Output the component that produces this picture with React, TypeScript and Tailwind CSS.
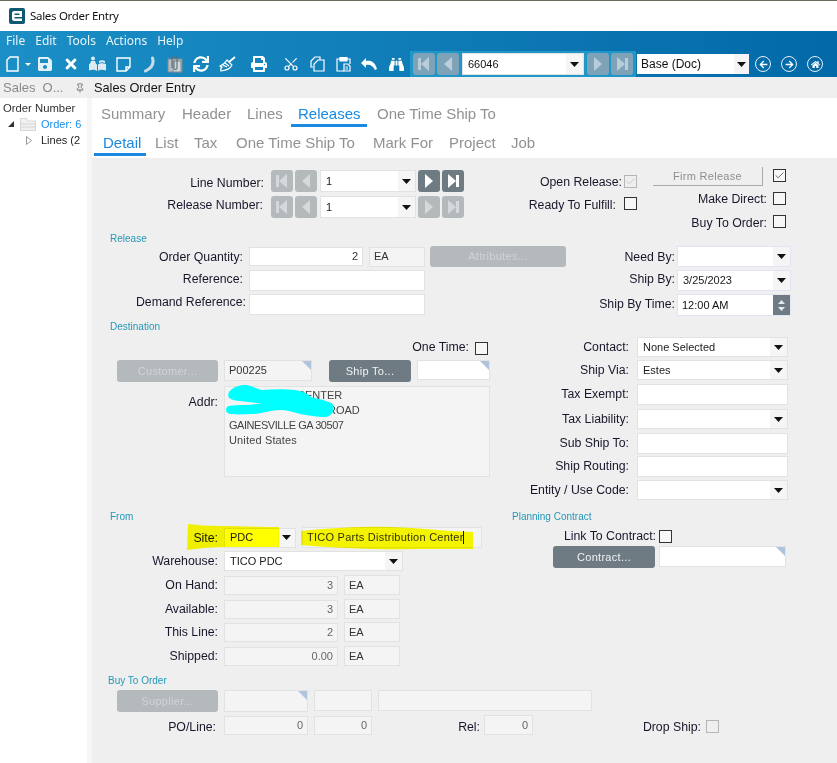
import type { ReactNode } from 'react';
import clsx from 'clsx';
import { Check, Pin, Scissors } from 'lucide-react';
import { FaArrowLeft, FaArrowRight, FaBinoculars, FaHome, FaPrint, FaSave, FaSync, FaTimes } from 'react-icons/fa';

type Glyph = 'first' | 'prev' | 'next' | 'last';

function NavButton({ glyph, className, fill }: { glyph: Glyph; className: string; fill: string }) {
  return (
    <div className={clsx('w-[22px] h-[22px] rounded-[3px] flex items-center justify-center shrink-0', className)}>
      <svg width="16" height="16" viewBox="0 0 16 16" fill={fill}>
        {glyph === 'first' && <path d="M2 2h3v12H2zM13 1v14L5 8z" />}
        {glyph === 'prev' && <path d="M12 1v14L4 8z" />}
        {glyph === 'next' && <path d="M4 1v14l8-7z" />}
        {glyph === 'last' && <path d="M11 2h3v12h-3zM3 1v14l8-7z" />}
      </svg>
    </div>
  );
}

function Arrow() {
  return (
    <svg width="9" height="5" viewBox="0 0 9 5" fill="#111">
      <path d="M0 0h9L4.500 5z" />
    </svg>
  );
}

function Label({ children, className }: { children: ReactNode; className: string }) {
  return <div className={clsx('shrink-0 text-right text-[12.3px] leading-none whitespace-nowrap text-[#17172b]', className)}>{children}</div>;
}

function Caption({ children, className }: { children: ReactNode; className: string }) {
  return <div className={clsx('text-[10px] text-[#2398b8] whitespace-nowrap', className)}>{children}</div>;
}

function Field({ children, className, readOnly, right, corner }: { children?: ReactNode; className: string; readOnly?: boolean; right?: boolean; corner?: boolean }) {
  return (
    <div
      className={clsx(
        'relative shrink-0 border border-[#e2e2e2] flex items-center px-[4px] text-[11px] text-[#333] whitespace-nowrap overflow-hidden',
        readOnly ? 'bg-[#f4f4f4]' : 'bg-white',
        right && 'justify-end',
        className,
      )}
    >
      {children}
      {corner && <div className="absolute top-0 right-0 w-0 h-0 border-l-[9px] border-l-transparent border-t-[9px] border-t-[#b0c4de]" />}
    </div>
  );
}

function Combo({ text, className, lilac }: { text?: string; className: string; lilac?: boolean }) {
  return (
    <div className={clsx('shrink-0 flex bg-white border text-[11px] text-[#1a1a1a]', lilac ? 'border-[#e3e3f6]' : 'border-[#e2e2e2]', className)}>
      <div className="flex-1 flex items-center pl-[5px] whitespace-nowrap overflow-hidden">{text}</div>
      <div className="w-[17px] flex items-center justify-center bg-[#f5f5f5]">
        <Arrow />
      </div>
    </div>
  );
}

function Btn({ children, className, off }: { children: ReactNode; className: string; off?: boolean }) {
  return (
    <div className={clsx('shrink-0 rounded-[3px] flex items-center justify-center text-[11px] tracking-[0.3px]', off ? 'bg-[#b4b9bc] text-[#d0d4d6]' : 'bg-[#6e7b83] text-[#f0f2f3]', className)}>
      {children}
    </div>
  );
}

function Cb({ on, off, className }: { on?: boolean; off?: boolean; className?: string }) {
  return (
    <div className={clsx('w-[13px] h-[13px] shrink-0 border flex items-center justify-center', off ? 'border-[#b5b5b5]' : 'border-[#333] bg-[#f7f7f7]', className)}>
      {on && <Check size={11} strokeWidth={1.5} color={off ? '#b5b5b5' : '#333'} />}
    </div>
  );
}

function Slot({ children }: { children: ReactNode }) {
  return <div className="w-[26px] flex items-center justify-center shrink-0 text-white">{children}</div>;
}

function Tab({ children, active, className }: { children: ReactNode; active?: boolean; className?: string }) {
  return (
    <div className={clsx('h-full flex items-center pt-[7px] border-b-[3px] text-[15px] whitespace-nowrap', active ? 'border-[#1a8ae0] text-[#1a8ae0]' : 'border-transparent text-[#919191]', className)}>
      {children}
    </div>
  );
}

function RightRow({ label, className, children }: { label: string; className?: string; children: ReactNode }) {
  return (
    <div className={clsx('flex items-center', className)}>
      <Label className="w-[129px]">{label}</Label>
      <div className="ml-[8px]">{children}</div>
    </div>
  );
}

function QtyRow({ label, value, className }: { label: string; value: string; className: string }) {
  return (
    <div className={clsx('flex items-center h-[20px]', className)}>
      <Label className="w-[126px]">{label}</Label>
      <Field readOnly right className="ml-[6px] w-[114px] h-[19px] text-[#666]">{value}</Field>
      <Field readOnly className="ml-[6px] w-[56px] h-[20px]">EA</Field>
    </div>
  );
}

export default function App() {
  return (
    <div className="w-[837px] h-[763px] overflow-hidden bg-[#efefef] font-['Liberation_Sans',sans-serif]">
      <div className="h-[1px] bg-[#6b6b5e]" />
      <div className="h-[30px] bg-white flex items-center pl-[9px]">
        <svg width="16" height="16" viewBox="0 0 16 16">
          <rect width="16" height="16" rx="2" fill="#0f5a72" />
          <path d="M3 4.500 4.500 3H13v6H5.500v1.500H13V13H4.500L3 11.500zM5.500 5.500V7h5V5.500z" fill="#fff" fillRule="evenodd" />
        </svg>
        <div className="ml-[5px] text-[11.5px] font-['Noto_Sans',sans-serif] tracking-[-0.3px] text-[#111]">Sales Order Entry</div>
      </div>

      <div className="h-[46px] bg-gradient-to-r from-[#1b8fc6] to-[#0369a8]">
        <div className="h-[20px] flex items-center pl-[6px] gap-[10px] text-[12px] text-[#e8f4fb] font-['Noto_Sans',sans-serif]">
          <span>File</span>
          <span>Edit</span>
          <span>Tools</span>
          <span>Actions</span>
          <span>Help</span>
        </div>
        <div className="h-[26px] flex items-center">
          <div className="w-[32px] shrink-0 flex items-center pl-[6px] text-white">
            <svg width="13" height="16" viewBox="0 0 13 16" fill="none" stroke="#fff" strokeWidth="1.4">
              <path d="M4 1h8v14H1V4z" />
            </svg>
            <svg className="ml-[6px]" width="6" height="3" viewBox="0 0 6 3" fill="#fff">
              <path d="M0 0h6L3 3z" />
            </svg>
          </div>
          <Slot><FaSave size={16} color="#e4f0f7" /></Slot>
          <Slot><FaTimes size={16} /></Slot>
          <Slot>
            <svg width="17" height="16" viewBox="0 0 17 16" fill="#dcebf4">
              <circle cx="4" cy="2.500" r="2" />
              <path d="M2 5h4l1 3H1z" />
              <path d="M0 8c3-1 6-1 8 .500V15c-2-1.500-5-1.500-8-.500zM9 8.500c2-1.500 5-1.500 8-.500v6.500c-3-1-6-1-8 .500z" />
              <path d="M10 5c2-1 4-1 6 0v2c-2-1-4-1-6 0z" />
            </svg>
          </Slot>
          <Slot>
            <svg width="15" height="15" viewBox="0 0 15 15" fill="none" stroke="#fff" strokeWidth="1.4">
              <path d="M1 1h13v9l-4 4H1zM14 10h-4v4" />
            </svg>
          </Slot>
          <Slot>
            <svg width="13" height="17" viewBox="0 0 13 17" fill="none" stroke="#c9dbe6" strokeWidth="3" strokeLinecap="round">
              <path d="M9.500 2c1.500 5-.500 10-7 13" />
            </svg>
          </Slot>
          <Slot>
            <svg width="16" height="17" viewBox="0 0 16 17">
              <rect x="1" y="3" width="14" height="13" fill="#b4bec4" stroke="#7b8a93" />
              <rect x="6" y="5" width="8" height="11" fill="#cfd6da" stroke="#7b8a93" />
              <path d="M5 12V3c0-3 5-3 5 0v9c0 2-3 2-3 0V5" fill="none" stroke="#5f6c74" strokeWidth="1.100" />
            </svg>
          </Slot>
          <Slot><FaSync size={16} /></Slot>
          <Slot>
            <svg width="17" height="16" viewBox="0 0 17 16" fill="none" stroke="#fff" strokeWidth="1.200">
              <path d="M16 1 10 6" strokeWidth="1.800" />
              <path d="M8 4l5 5c-2 4-5 5-11 6-1-2 0-3 1-4-1 0-1 0-2-1 3-1 5-3 7-6zM4 9l4 2M6 7l4 3" />
            </svg>
          </Slot>
          <div className="w-[6px] shrink-0" />
          <Slot><FaPrint size={16} /></Slot>
          <div className="w-[6px] shrink-0" />
          <Slot><Scissors size={16} strokeWidth={1.8} className="-rotate-90" /></Slot>
          <Slot>
            <svg width="15" height="16" viewBox="0 0 15 16" fill="none" stroke="#fff" strokeWidth="1.200">
              <path d="M3 11H1V5l4-4h5v3" />
              <path d="M8 4h6v11H4V8z" />
            </svg>
          </Slot>
          <Slot>
            <svg width="15" height="16" viewBox="0 0 15 16" fill="none" stroke="#fff" strokeWidth="1.200">
              <path d="M4 3H1v12h7M11 3h3v5" />
              <path d="M4 1.500h7V5H4z" fill="#fff" />
              <path d="M8 8h4l2 2v5H8zM9.500 11H12M9.500 13H12" />
            </svg>
          </Slot>
          <Slot>
            <svg width="16" height="12" viewBox="0 0 16 12" fill="#fff">
              <path d="M0 5l5-5v3c5-1 9 1 11 8l-2 1c-2-4-5-6-9-5v3z" />
            </svg>
          </Slot>
          <div className="w-[1px] shrink-0" />
          <Slot><FaBinoculars size={15} /></Slot>
          <div className="h-full flex items-center bg-[#2196c8] px-[3px] gap-[2px] ml-[1px]">
            <NavButton glyph="first" className="bg-[#7ea3b8]" fill="#b9cdd9" />
            <NavButton glyph="prev" className="bg-[#7ea3b8]" fill="#b9cdd9" />
            <div className="w-[122px] h-[22px] ml-[1px] mr-[1px] flex bg-white border border-[#e2e2e2] text-[11px] text-[#111]">
              <div className="flex-1 flex items-center pl-[5px]">66046</div>
              <div className="w-[17px] flex items-center justify-center bg-[#f5f5f5]"><Arrow /></div>
            </div>
            <NavButton glyph="next" className="bg-[#7ea3b8]" fill="#b9cdd9" />
            <NavButton glyph="last" className="bg-[#7ea3b8]" fill="#b9cdd9" />
          </div>
          <div className="ml-[1px] w-[112px] h-[20px] flex bg-white text-[12px] text-[#111]">
            <div className="flex-1 flex items-center pl-[4px]">Base (Doc)</div>
            <div className="w-[15px] flex items-center justify-center bg-[#f5f5f5]"><Arrow /></div>
          </div>
          <div className="ml-[6px] w-[16px] h-[16px] rounded-full border border-[#e5f0f7] flex items-center justify-center"><FaArrowLeft size={9} color="#fff" /></div>
          <div className="ml-[10px] w-[16px] h-[16px] rounded-full border border-[#e5f0f7] flex items-center justify-center"><FaArrowRight size={9} color="#fff" /></div>
          <div className="ml-[10px] w-[16px] h-[16px] rounded-full border border-[#e5f0f7] flex items-center justify-center"><FaHome size={9} color="#fff" /></div>
        </div>
      </div>

      <div className="flex h-[686px]">
        <div className="w-[87px] shrink-0 bg-white overflow-hidden">
          <div className="h-[21px] bg-[#efefef] flex items-center pl-[3px] text-[13px] text-[#8a8a8a] whitespace-nowrap">
            <span>Sales</span>
            <span className="ml-[7px]">O...</span>
            <Pin size={10} className="ml-[12px]" color="#666" />
          </div>
          <div className="pl-[3px] pt-[4px] text-[11.3px] leading-[13px] text-[#333]">Order Number</div>
          <div className="flex items-center h-[16px] mt-[1px] text-[11px] whitespace-nowrap">
            <svg className="ml-[8px]" width="6" height="6" viewBox="0 0 6 6" fill="#333"><path d="M6 0v6H0z" /></svg>
            <svg className="ml-[6px]" width="16" height="13" viewBox="0 0 16 13" fill="#f1f1f1" stroke="#c9c9c9" strokeWidth="0.7">
              <path d="M0.500 3V0.500h6L8 3h7.500v9.500h-15z" />
              <path d="M0.500 6h15M0.500 9h15" />
            </svg>
            <span className="ml-[5px] text-[#1a8fe8]">Order: 6</span>
          </div>
          <div className="flex items-center h-[16px] text-[11px] whitespace-nowrap text-[#222]">
            <svg className="ml-[26px]" width="6" height="9" viewBox="0 0 6 9" fill="none" stroke="#999"><path d="M0.500 0.500v8l5-4z" /></svg>
            <span className="ml-[9px]">Lines (2</span>
          </div>
        </div>
        <div className="w-[5px] shrink-0 bg-[#f6f6f6]">
          <div className="h-[21px] bg-[#efefef]" />
        </div>

        <div className="w-[745px]">
          <div className="h-[21px] bg-[#efefef] flex items-center pl-[2px] text-[12.75px] text-[#111]">Sales Order Entry</div>
          <div className="bg-white h-[60px]">
            <div className="h-[29px] flex pl-[9px]">
              <Tab className="w-[81px]">Summary</Tab>
              <Tab className="w-[65px]">Header</Tab>
              <Tab className="w-[44px]">Lines</Tab>
              <Tab active className="w-[76px] pl-[7px]">Releases</Tab>
              <Tab className="ml-[10px]">One Time Ship To</Tab>
            </div>
            <div className="h-[29px] flex pl-[2px]">
              <Tab active className="w-[52px] pl-[9px]">Detail</Tab>
              <Tab className="ml-[9px] w-[39px]">List</Tab>
              <Tab className="w-[42px]">Tax</Tab>
              <Tab className="w-[137px]">One Time Ship To</Tab>
              <Tab className="w-[76px]">Mark For</Tab>
              <Tab className="w-[62px]">Project</Tab>
              <Tab>Job</Tab>
            </div>
          </div>

          <div className="flex h-[74px]">
            <div className="w-[408px] shrink-0 pt-[12px]">
              <div className="flex items-center h-[22px]">
                <Label className="w-[172px] pt-[4px]">Line Number:</Label>
                <div className="ml-[7px] flex gap-[2px]">
                  <NavButton glyph="first" className="bg-[#b4b9bc]" fill="#d5d9dc" />
                  <NavButton glyph="prev" className="bg-[#b4b9bc]" fill="#d5d9dc" />
                </div>
                <Combo text="1" className="ml-[3px] w-[96px] h-[22px]" />
                <div className="ml-[2px] flex gap-[2px]">
                  <NavButton glyph="next" className="bg-[#6e7b83]" fill="#fff" />
                  <NavButton glyph="last" className="bg-[#6e7b83]" fill="#fff" />
                </div>
              </div>
              <div className="flex items-center h-[22px] mt-[4px]">
                <Label className="w-[171px] pb-[4px]">Release Number:</Label>
                <div className="ml-[8px] flex gap-[2px]">
                  <NavButton glyph="first" className="bg-[#b4b9bc]" fill="#d5d9dc" />
                  <NavButton glyph="prev" className="bg-[#b4b9bc]" fill="#d5d9dc" />
                </div>
                <Combo text="1" className="ml-[3px] w-[96px] h-[22px]" />
                <div className="ml-[2px] flex gap-[2px]">
                  <NavButton glyph="next" className="bg-[#b4b9bc]" fill="#d5d9dc" />
                  <NavButton glyph="last" className="bg-[#b4b9bc]" fill="#d5d9dc" />
                </div>
              </div>
            </div>
            <div className="w-[140px] shrink-0 pt-[17px]">
              <div className="flex items-center h-[13px]">
                <Label className="w-[122px] pt-[2px]">Open Release:</Label>
                <Cb on off className="ml-[2px]" />
              </div>
              <div className="flex items-center h-[13px] mt-[9px]">
                <Label className="w-[116px] pt-[4px]">Ready To Fulfill:</Label>
                <Cb className="ml-[8px]" />
              </div>
            </div>
            <div className="ml-[13px] pt-[9px]">
              <div className="flex h-[19px]">
                <div className="w-[110px] h-[19px] border-r border-b border-[#aaa] flex items-center justify-center text-[11px] text-[#8b8f92] tracking-[0.3px]">Firm Release</div>
                <Cb on className="ml-[10px] mt-[2px]" />
              </div>
              <div className="flex items-center h-[13px] mt-[6px]">
                <Label className="w-[114px] pt-[2px]">Make Direct:</Label>
                <Cb className="ml-[6px]" />
              </div>
              <div className="flex items-center h-[13px] mt-[10px]">
                <Label className="w-[114px] pt-[4px]">Buy To Order:</Label>
                <Cb className="ml-[6px]" />
              </div>
            </div>
          </div>

          <div className="flex h-[88px]">
            <div className="w-[478px] shrink-0">
              <Caption className="pl-[18px] h-[14px] leading-[14px]">Release</Caption>
              <div className="flex items-center h-[21px]">
                <Label className="w-[151px] pt-[2px]">Order Quantity:</Label>
                <Field right className="ml-[6px] w-[114px] h-[19px] text-[#111]">2</Field>
                <Field readOnly className="ml-[6px] w-[56px] h-[20px]">EA</Field>
                <Btn off className="ml-[5px] w-[136px] h-[21px]">Attributes...</Btn>
              </div>
              <div className="flex items-center h-[21px] mt-[3px]">
                <Label className="w-[151px] pb-[2px]">Reference:</Label>
                <Field className="ml-[6px] w-[176px] h-[21px]" />
              </div>
              <div className="flex items-center h-[21px] mt-[3px]">
                <Label className="w-[154px] pb-[4px]">Demand Reference:</Label>
                <Field className="ml-[3px] w-[176px] h-[21px]" />
              </div>
            </div>
            <div className="pt-[14px]">
              <div className="flex items-center h-[21px]">
                <Label className="w-[105px] pt-[2px]">Need By:</Label>
                <Combo lilac className="ml-[2px] w-[114px] h-[21px]" />
              </div>
              <div className="flex items-center h-[21px] mt-[3px]">
                <Label className="w-[105px] pb-[2px]">Ship By:</Label>
                <Combo lilac text="3/25/2023" className="ml-[2px] w-[114px] h-[21px]" />
              </div>
              <div className="flex items-center h-[22px] mt-[3px]">
                <Label className="w-[105px] pb-[2px]">Ship By Time:</Label>
                <div className="ml-[2px] w-[114px] h-[22px] flex bg-white border border-[#e3e3f6] text-[11px] text-[#111]">
                  <div className="flex-1 flex items-center pl-[4px]">12:00 AM</div>
                  <div className="w-[17px] bg-[#6e7b83] flex flex-col items-center justify-center gap-[3px]">
                    <svg width="7" height="4" viewBox="0 0 7 4" fill="#e6e9ea"><path d="M0 4h7L3.500 0z" /></svg>
                    <svg width="7" height="4" viewBox="0 0 7 4" fill="#e6e9ea"><path d="M0 0h7L3.500 4z" /></svg>
                  </div>
                </div>
              </div>
            </div>
          </div>

          <div className="flex h-[190px]">
            <div className="w-[408px] shrink-0">
              <Caption className="pl-[18px] h-[14px] leading-[14px]">Destination</Caption>
              <div className="flex items-center h-[13px] mt-[8px]">
                <Label className="w-[377px] pb-[2px]">One Time:</Label>
                <Cb className="ml-[6px]" />
              </div>
              <div className="flex items-start h-[22px] mt-[5px] pl-[25px]">
                <Btn off className="w-[101px] h-[22px]">Customer...</Btn>
                <Field readOnly corner className="ml-[6px] w-[88px] h-[21px]">P00225</Field>
                <Btn className="ml-[17px] w-[82px] h-[22px]">Ship To...</Btn>
                <Field corner className="ml-[6px] w-[73px] h-[20px]" />
              </div>
              <div className="flex items-start mt-[4px]">
                <Label className="w-[126px] pt-[10px]">Addr:</Label>
                <div className="relative ml-[6px] w-[266px] h-[91px] bg-[#f4f4f4] border border-[#e2e2e2] pl-[4px] pt-[1px] text-[11px] leading-[15px] text-[#444]">
                  <div className="pl-[68px]">CENTER</div>
                  <div className="pl-[99px]">ROAD</div>
                  <div className="tracking-[-0.45px]">GAINESVILLE GA 30507</div>
                  <div className="tracking-[0.15px]">United States</div>
                  <svg className="absolute left-0 top-[-3px]" width="112" height="36" viewBox="0 0 112 36" fill="#00ffff">
                    <path d="M4 8C8 3 14 1 20 1c6 0 11 4 17 5 12-1 24-1 33 0 7 1 12 3 16 7 8 2 22 5 22 8v7c-2 3-5 5-8 5-9 0-17-2-25-3-7-2-13-4-20-4-8 0-17 3-25 4-8 0-17 1-23 0-4 0-6-2-6-4 0-2 1-3 2-4 6-1 11-1 17-1 6 0 12-1 17-2-8 0-15-1-22-2-4 0-8-1-11-3-1-2-1-4 0-6z" />
                  </svg>
                </div>
              </div>
            </div>
            <div className="pt-[17px]">
              <RightRow label="Contact:"><Combo text="None Selected" className="w-[151px] h-[20px]" /></RightRow>
              <RightRow label="Ship Via:" className="mt-[3px]"><Combo text="Estes" className="w-[151px] h-[20px]" /></RightRow>
              <RightRow label="Tax Exempt:" className="mt-[4px]"><Field className="w-[151px] h-[21px]" /></RightRow>
              <RightRow label="Tax Liability:" className="mt-[4px]"><Combo className="w-[151px] h-[20px]" /></RightRow>
              <RightRow label="Sub Ship To:" className="mt-[4px]"><Field className="w-[151px] h-[21px]" /></RightRow>
              <RightRow label="Ship Routing:" className="mt-[2px]"><Field className="w-[151px] h-[21px]" /></RightRow>
              <RightRow label="Entity / Use Code:" className="mt-[3px]"><Combo className="w-[151px] h-[20px]" /></RightRow>
            </div>
          </div>

          <div className="flex h-[162px]">
            <div className="w-[420px] shrink-0">
              <Caption className="pl-[18px] h-[14px] leading-[14px]">From</Caption>
              <div className="relative flex items-center h-[21px] mt-[3px]">
                <Label className="w-[126px] pt-[1px]">Site:</Label>
                <Combo text="PDC" className="ml-[6px] w-[72px] h-[20px]" />
                <Field readOnly className="ml-[6px] w-[180px] h-[21px] tracking-[0.25px]">TICO Parts Distribution Center</Field>
                <svg className="absolute left-[95px] top-[-4px] mix-blend-multiply" width="288" height="29" viewBox="0 0 288 29" fill="#ffff00">
                  <path d="M1 1c10 1 20 2 30 2 20 0 40 1 61 1v20H40c-14 0-27 1-40 3z" />
                  <path d="M114 8c30-3 60-5 90-4 30 1 50 4 82 5v17H230c-40 1-80-1-116-4z" />
                </svg>
                <div className="absolute left-[371px] top-[4px] w-[1px] h-[13px] bg-[#111]" />
              </div>
              <div className="flex items-center h-[20px] mt-[3px]">
                <Label className="w-[126px]">Warehouse:</Label>
                <Combo text="TICO PDC" className="ml-[6px] w-[179px] h-[20px]" />
              </div>
              <QtyRow label="On Hand:" value="3" className="mt-[4px]" />
              <QtyRow label="Available:" value="3" className="mt-[4px]" />
              <QtyRow label="This Line:" value="2" className="mt-[3px]" />
              <QtyRow label="Shipped:" value="0.00" className="mt-[4px]" />
            </div>
            <div>
              <Caption className="h-[14px] leading-[14px]">Planning Contract</Caption>
              <div className="flex items-center h-[13px] mt-[6px]">
                <Label className="w-[144px]">Link To Contract:</Label>
                <Cb className="ml-[3px]" />
              </div>
              <div className="flex items-start mt-[3px] pl-[41px]">
                <Btn className="w-[102px] h-[22px]">Contract...</Btn>
                <Field corner className="ml-[4px] w-[127px] h-[21px]" />
              </div>
            </div>
          </div>

          <Caption className="pl-[16px] h-[18px] leading-[17px]">Buy To Order</Caption>
          <div className="flex items-start pl-[25px] h-[22px]">
            <Btn off className="w-[101px] h-[22px]">Supplier...</Btn>
            <Field readOnly corner className="ml-[6px] w-[84px] h-[22px]" />
            <Field readOnly className="ml-[6px] w-[58px] h-[21px]" />
            <Field readOnly className="ml-[6px] w-[214px] h-[21px]" />
          </div>
          <div className="flex items-center h-[20px] mt-[3px]">
            <Label className="w-[124px] pt-[4px]">PO/Line:</Label>
            <Field readOnly right className="ml-[8px] w-[84px] h-[19px] mt-[1px] text-[#666]">0</Field>
            <Field readOnly right className="ml-[6px] w-[58px] h-[19px] text-[#666]">0</Field>
            <Label className="w-[108px] pt-[4px]">Rel:</Label>
            <Field readOnly right className="ml-[4px] w-[49px] h-[20px] text-[#666]">0</Field>
            <Label className="w-[168px] pt-[4px]">Drop Ship:</Label>
            <Cb off className="ml-[5px] mt-[3px]" />
          </div>
        </div>
      </div>
    </div>
  );
}
